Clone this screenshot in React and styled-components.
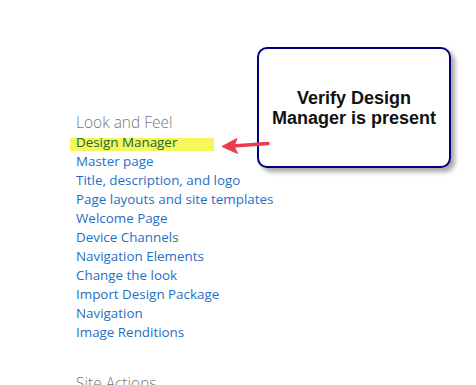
import React from "react";
import styled, { createGlobalStyle } from "styled-components";

const GlobalStyle = createGlobalStyle`
  html, body {
    margin: 0;
    padding: 0;
    background: #fff;
  }
  body {
    width: 476px;
    height: 385px;
    overflow: hidden;
  }
`;

const Page = styled.div`
  position: relative;
  width: 476px;
  height: 385px;
  overflow: hidden;
  font-family: "Open Sans", "Noto Sans", sans-serif;
`;

const Section = styled.div`
  display: flex;
  flex-direction: column;
  padding: 111px 0 0 76px;
`;

const Heading = styled.div`
  font-size: 15.5px;
  font-weight: 300;
  color: #777;
  line-height: 22px;
  margin-top: ${(p) => p.$gap || 0}px;
`;

const LinkList = styled.ul`
  display: flex;
  flex-direction: column;
  list-style: none;
  margin: 0;
  padding: 0;
`;

const Item = styled.li`
  font-size: 13.4px;
  line-height: 19px;
  height: 19px;
  color: #1f6fc5;
  white-space: nowrap;
`;

const Marked = styled.span`
  display: inline-block;
  width: 138px;
  margin-left: -6px;
  padding-left: 6px;
  color: #14683c;
  background: linear-gradient(
    to bottom,
    transparent 5px,
    #f7f65a 5px,
    #f7f65a 18px,
    transparent 18px
  );
`;

const Callout = styled.div`
  position: absolute;
  left: 257px;
  top: 47px;
  width: 190px;
  height: 117px;
  border: 2.5px solid #00007f;
  border-radius: 10px;
  background: #fff;
  box-shadow: 4px 4px 5px rgba(0, 0, 0, 0.35);
  display: flex;
  align-items: center;
  justify-content: center;
  text-align: center;
  font-family: "Liberation Sans", Arial, sans-serif;
  font-weight: bold;
  font-size: 18px;
  line-height: 20px;
  color: #111;
`;

const Arrow = styled.svg`
  position: absolute;
  left: 219px;
  top: 134px;
  z-index: 2;
`;

const links = [
  "Design Manager",
  "Master page",
  "Title, description, and logo",
  "Page layouts and site templates",
  "Welcome Page",
  "Device Channels",
  "Navigation Elements",
  "Change the look",
  "Import Design Package",
  "Navigation",
  "Image Renditions",
];

export default function App() {
  return (
    <Page>
      <GlobalStyle />
      <Section>
        <Heading>Look and Feel</Heading>
        <LinkList>
          {links.map((l, i) => (
            <Item key={l}>{i === 0 ? <Marked>{l}</Marked> : l}</Item>
          ))}
        </LinkList>
        <Heading $gap={30}>Site Actions</Heading>
      </Section>
      <Callout>
        Verify Design
        <br />
        Manager is present
      </Callout>
      <Arrow width="54" height="24" viewBox="0 0 54 24">
        <path d="M14 12 L49 9.5" stroke="#ee3b4a" strokeWidth="3.5" strokeLinecap="round" fill="none" />
        <path d="M3 12.5 L18 4.5 L15 12 L18.5 19.5 Z" fill="#ee3b4a" strokeLinejoin="round" stroke="#ee3b4a" strokeWidth="1" />
      </Arrow>
    </Page>
  );
}
